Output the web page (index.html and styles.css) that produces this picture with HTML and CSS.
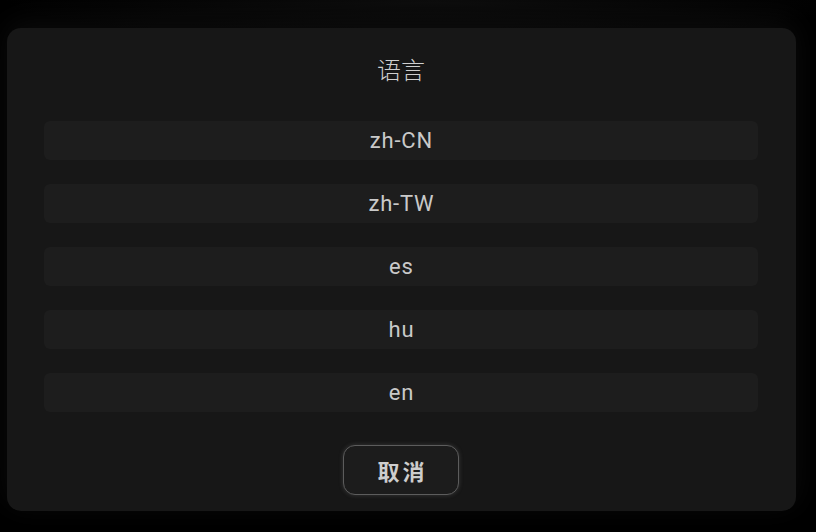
FILE: index.html
```html
<!DOCTYPE html>
<html lang="zh-CN">
<head>
<meta charset="utf-8">
<link rel="stylesheet" href="styles.css">
</head>
<body>
<div class="screen">
  <div class="dialog">
    <div class="title">语言</div>
    <ul class="list">
      <li class="item">zh-CN</li>
      <li class="item">zh-TW</li>
      <li class="item">es</li>
      <li class="item">hu</li>
      <li class="item">en</li>
    </ul>
    <div class="actions">
      <button class="cancel">取消</button>
    </div>
  </div>
</div>
</body>
</html>
```
FILE: styles.css
```css
html, body {
  margin: 0;
  padding: 0;
  background: #000;
}
body {
  width: 816px;
  height: 532px;
  overflow: hidden;
  font-family: Roboto, "Noto Sans CJK SC", sans-serif;
}
.screen {
  width: 816px;
  height: 532px;
  box-sizing: border-box;
  padding: 28px 20px 0 7px;
  background:
    radial-gradient(ellipse 460px 44px at 430px 0px, #0d0d0d 0%, rgba(13,13,13,0) 100%),
    #000;
}
.dialog {
  width: 789px;
  height: 483px;
  box-sizing: border-box;
  background: #171717;
  border-radius: 14px;
  padding: 25px 38px 0 37px;
  display: flex;
  flex-direction: column;
  box-shadow: 0 -6px 30px rgba(20,20,20,0.6);
}
.title {
  text-align: center;
  font-family: "Noto Sans CJK SC", sans-serif;
  font-weight: 300;
  font-size: 24px;
  line-height: 32px;
  color: #cfcfcf;
  margin-bottom: 36px;
}
.list {
  list-style: none;
  margin: 0;
  padding: 0;
  display: flex;
  flex-direction: column;
  gap: 24px;
}
.item {
  height: 39px;
  line-height: 39px;
  background: #1d1d1d;
  border-radius: 6px;
  text-align: center;
  font-size: 22px;
  letter-spacing: 0.8px;
  text-indent: 0.8px;
  color: #c9c9c9;
}
.actions {
  display: flex;
  justify-content: center;
  margin-top: 33px;
}
.cancel {
  width: 116px;
  height: 50px;
  box-sizing: border-box;
  background: #1c1c1c;
  border: 1px solid #5c5c5c;
  border-radius: 12px;
  box-shadow: 0 0 4px rgba(120,120,120,0.35);
  color: #cdcdcd;
  font-family: "Noto Sans CJK SC", sans-serif;
  font-weight: 700;
  font-size: 22px;
  letter-spacing: 3px;
  text-indent: 3px;
  line-height: 46px;
  padding: 0;
}
```
